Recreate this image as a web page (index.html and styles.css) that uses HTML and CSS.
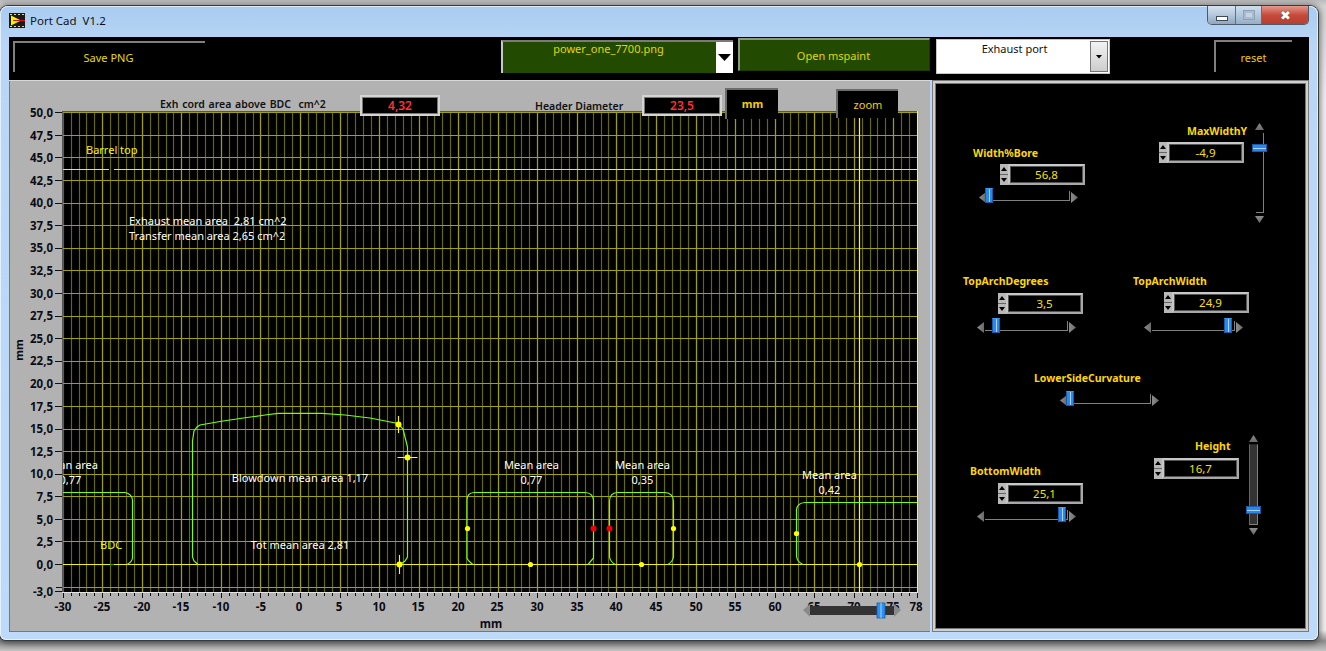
FILE: index.html
```html
<!DOCTYPE html>
<html lang="en">
<head>
<meta charset="utf-8">
<title>Port Cad V1.2</title>
<link rel="stylesheet" href="styles.css">
</head>
<body>
<div class="window">
  <header class="titlebar">
    <svg class="app-icon" width="16" height="15" viewBox="0 0 16 15">
      <rect width="16" height="15" fill="#1a1a1a"/>
      <path d="M1 1h2v1H1zM5 1h2v1H5zM9 1h2v1H9zM13 1h2v1h-2zM1 13h2v1H1zM5 13h2v1H5zM9 13h2v1H9zM13 13h2v1h-2z" fill="#e8d8a0"/>
      <path d="M2 2.500l10 5-10 5z" fill="#fff200"/>
      <path d="M4 7.500h12" stroke="#e01010"/>
    </svg>
    <span class="title-text">Port Cad&nbsp; V1.2</span>
    <div class="win-buttons">
      <div class="wb wb-min"><span class="min-glyph"></span></div>
      <div class="wb wb-max"><span class="max-glyph"></span></div>
      <div class="wb wb-close">✖</div>
    </div>
  </header>

  <div class="content">
    <div class="toolbar">
      <div class="tbtn save">Save PNG</div>
      <div class="combo">
        <span class="combo-text">power_one_7700.png</span>
        <span class="combo-arrow"><i></i></span>
      </div>
      <div class="open">Open mspaint</div>
      <div class="ring">
        <span class="ring-text">Exhaust port</span>
        <span class="ring-arrow"><i></i></span>
      </div>
      <div class="tbtn reset">reset</div>
    </div>

    <div class="main">
      <section class="graph-panel">
        <div class="graph-head">
          <span class="head-label l-cord">Exh cord area above BDC&nbsp; cm^2</span>
          <span class="indicator i-cord">4,32</span>
          <span class="head-label l-header">Header Diameter</span>
          <span class="indicator i-header">23,5</span>
          <span class="graph-btn b-mm">mm</span>
          <span class="graph-btn b-zoom">zoom</span>
        </div>

        <svg class="chart" width="921" height="521" viewBox="9 111 921 521" shape-rendering="crispEdges">
          <defs>
            <path id="vminor" d="M63 111v481M71 111v481M79 111v481M86 111v481M94 111v481M110 111v481M118 111v481M126 111v481M134 111v481M150 111v481M158 111v481M166 111v481M173 111v481M189 111v481M197 111v481M205 111v481M213 111v481M229 111v481M237 111v481M245 111v481M253 111v481M268 111v481M276 111v481M284 111v481M292 111v481M308 111v481M316 111v481M324 111v481M332 111v481M347 111v481M355 111v481M363 111v481M371 111v481M387 111v481M395 111v481M403 111v481M411 111v481M427 111v481M434 111v481M442 111v481M450 111v481M466 111v481M474 111v481M482 111v481M490 111v481M506 111v481M514 111v481M521 111v481M529 111v481M545 111v481M553 111v481M561 111v481M569 111v481M585 111v481M593 111v481M601 111v481M608 111v481M624 111v481M632 111v481M640 111v481M648 111v481M664 111v481M672 111v481M680 111v481M688 111v481M703 111v481M711 111v481M719 111v481M727 111v481M743 111v481M751 111v481M759 111v481M767 111v481M783 111v481M790 111v481M798 111v481M806 111v481M822 111v481M830 111v481M838 111v481M846 111v481M862 111v481M870 111v481M877 111v481M885 111v481M901 111v481M909 111v481M917 111v481"/>
            <path id="vmajor" d="M102 111v481M142 111v481M181 111v481M221 111v481M260 111v481M300 111v481M340 111v481M379 111v481M419 111v481M458 111v481M498 111v481M537 111v481M577 111v481M616 111v481M656 111v481M696 111v481M735 111v481M775 111v481M814 111v481M854 111v481M893 111v481"/>
            <clipPath id="plot-clip"><rect x="63" y="112" width="854" height="480"/></clipPath>
            <clipPath id="tick-minor"><rect x="60" y="593" width="860" height="3"/></clipPath>
            <clipPath id="tick-major"><rect x="60" y="593" width="860" height="5"/></clipPath>
          </defs>

          <!-- axis ticks -->
          <g class="ticks">
            <g clip-path="url(#tick-major)"><use href="#vmajor" transform="translate(0 8)"/><path d="M63 593v5M917 593v5"/></g>
            <g clip-path="url(#tick-minor)"><use href="#vminor" transform="translate(0 8)"/></g>
            <path d="M55 112.500h7M55 135.500h7M55 157.500h7M55 180.500h7M55 203.500h7M55 225.500h7M55 248.500h7M55 270.500h7M55 293.500h7M55 316.500h7M55 338.500h7M55 361.500h7M55 383.500h7M55 406.500h7M55 429.500h7M55 451.500h7M55 474.500h7M55 496.500h7M55 519.500h7M55 541.500h7M55 564.500h7M56 587.500h6M55 591.500h7"/>
          </g>

          <!-- plot -->
          <rect class="plot-bg" x="62" y="111" width="855" height="481"/>
          <g class="soft-lines" shape-rendering="geometricPrecision" transform="translate(.5 0)">
            <use href="#vminor" class="grid-minor"/>
            <use href="#vmajor" class="grid-major"/>
          </g>
          <path class="grid-h" d="M63 112.500H917M63 135.500H917M63 157.500H917M63 180.500H917M63 203.500H917M63 225.500H917M63 248.500H917M63 270.500H917M63 293.500H917M63 316.500H917M63 338.500H917M63 361.500H917M63 383.500H917M63 406.500H917M63 429.500H917M63 451.500H917M63 474.500H917M63 496.500H917M63 519.500H917M63 541.500H917M63 587.500H917"/>
          <path class="edge-dark" d="M62 592V111.500H917"/>
          <path class="edge-light" d="M917.500 111V592.500H62"/>

          <g clip-path="url(#plot-clip)">
            <path class="bright" d="M63 169.500H109M114 169.500H917M63 564.500H917"/>
            <path class="bright-v" shape-rendering="geometricPrecision" d="M859.500 112V592"/>
            <path class="plot-green" d="M110 564.500h4"/>
            <g class="curves" shape-rendering="geometricPrecision">
              <path d="M198 564.500L194 561 192.500 557V441L194 431 197 427 200 425 220 421.500 240 418.500 265 415 278 413.300H322L345 415 370 418 398 423.500 403 429 406 441 407.500 447V557L405 561 400 564.500"/>
              <path d="M63 492.500H125Q132 494 132.500 500V558Q132 562 127 564.500"/>
              <path d="M473 564.500Q468 561 467 558V500Q467 493 474 492.500H585Q593 493 593.500 500V558L588 564.500"/>
              <path d="M615 564.500Q610 561 609.500 557V501Q610 493 617 492.500H665Q673 493 673.500 501V557Q673 561 668 564.500"/>
              <path d="M803 564.500Q797 562 796.500 556V510Q797 503 805 502.500H917"/>
            </g>
            <g shape-rendering="geometricPrecision">
              <path class="cross" d="M398.500 416v17M397.500 457.500h20M399.500 555v19"/>
              <g class="dot-y">
                <circle cx="398.500" cy="424.500" r="3"/><circle cx="407.500" cy="457.500" r="3"/><circle cx="399.500" cy="564.500" r="3"/>
                <circle cx="467.500" cy="528.500" r="2.600"/><circle cx="530.500" cy="564.500" r="2.600"/><circle cx="673.500" cy="528.500" r="2.600"/>
                <circle cx="641.500" cy="564.500" r="2.600"/><circle cx="796.500" cy="533.500" r="2.600"/><circle cx="859.500" cy="564.500" r="2.600"/>
              </g>
              <g class="dot-r"><circle cx="593.500" cy="528.500" r="3"/><circle cx="609.500" cy="528.500" r="3"/></g>
            </g>
            <g class="plot-text" shape-rendering="geometricPrecision">
              <text x="129" y="225">Exhaust mean area&#160; 2,81 cm^2</text>
              <text x="129" y="240">Transfer mean area 2,65 cm^2</text>
              <g class="mid">
                <text x="300" y="482">Blowdown mean area 1,17</text>
                <text x="300" y="549">Tot mean area 2,81</text>
                <text x="70.500" y="484">0,77</text>
                <text x="531.500" y="469">Mean area</text><text x="531.500" y="484">0,77</text>
                <text x="642.500" y="469">Mean area</text><text x="642.500" y="484">0,35</text>
                <text x="829.500" y="479">Mean area</text><text x="829.500" y="494">0,42</text>
              </g>
              <text class="end" x="98" y="469">an area</text>
              <text class="plot-yellow" x="86" y="154">Barrel top</text>
              <text class="plot-yellow" x="100" y="549">BDC</text>
            </g>
          </g>

          <!-- axis labels -->
          <g class="axis-text y-labels" shape-rendering="geometricPrecision">
            <text x="53" y="117">50,0</text><text x="53" y="162">45,0</text><text x="53" y="140">47,5</text><text x="53" y="185">42,5</text>
            <text x="53" y="207">40,0</text><text x="53" y="230">37,5</text><text x="53" y="252">35,0</text><text x="53" y="275">32,5</text>
            <text x="53" y="298">30,0</text><text x="53" y="320">27,5</text><text x="53" y="343">25,0</text><text x="53" y="365">22,5</text>
            <text x="53" y="388">20,0</text><text x="53" y="411">17,5</text><text x="53" y="433">15,0</text><text x="53" y="456">12,5</text>
            <text x="53" y="478">10,0</text><text x="53" y="501">7,5</text><text x="53" y="524">5,0</text><text x="53" y="546">2,5</text>
            <text x="53" y="569">0,0</text><text x="53" y="596">-3,0</text>
          </g>
          <g class="axis-text x-labels" shape-rendering="geometricPrecision">
            <text x="63" y="611">-30</text><text x="102" y="611">-25</text><text x="142" y="611">-20</text><text x="181" y="611">-15</text>
            <text x="221" y="611">-10</text><text x="261" y="611">-5</text><text x="299" y="611">0</text><text x="339" y="611">5</text>
            <text x="379" y="611">10</text><text x="418" y="611">15</text><text x="458" y="611">20</text><text x="497" y="611">25</text>
            <text x="537" y="611">30</text><text x="577" y="611">35</text><text x="616" y="611">40</text><text x="656" y="611">45</text>
            <text x="696" y="611">50</text><text x="735" y="611">55</text><text x="775" y="611">60</text><text x="814" y="611">65</text>
            <text x="854" y="611">70</text><text x="893" y="611">75</text><text x="916" y="611">78</text>
            <text x="491" y="628">mm</text>
          </g>
          <text class="axis-text y-title" transform="translate(23 350) rotate(-90)" shape-rendering="geometricPrecision">mm</text>

          <!-- zoom slider on the chart -->
          <g shape-rendering="geometricPrecision">
            <path d="M803 610l7-6v13z" fill="#8a8a8a"/>
            <path d="M901 610l-7-6v13z" fill="#8a8a8a"/>
            <rect x="810" y="606" width="84" height="9" fill="#333"/>
            <rect x="877" y="603" width="8" height="15" fill="#2d8ff0" stroke="#1a5fb0" stroke-width=".8"/>
            <path d="M881 603v15" stroke="#a8d4ff"/>
          </g>
        </svg>
      </section>

      <aside class="side-panel">
        <div class="control c-width">
          <div class="ctl-label">Width%Bore</div>
          <div class="num"><span class="spin"><b></b><b class="dn"></b></span><span class="val">56,8</span></div>
          <div class="hslider"><i class="al"></i><i class="track"></i><i class="ar"></i><i class="thumb" style="left:6px"></i></div>
        </div>
        <div class="control c-max">
          <div class="ctl-main">
            <div class="ctl-label">MaxWidthY</div>
            <div class="num"><span class="spin"><b></b><b class="dn"></b></span><span class="val">-4,9</span></div>
          </div>
          <div class="vslider"><i class="au"></i><i class="vtrack"></i><i class="ad"></i><i class="vthumb" style="top:21px"></i></div>
        </div>
        <div class="control c-deg">
          <div class="ctl-label">TopArchDegrees</div>
          <div class="num"><span class="spin"><b></b><b class="dn"></b></span><span class="val">3,5</span></div>
          <div class="hslider"><i class="al"></i><i class="track"></i><i class="ar"></i><i class="thumb" style="left:15px"></i></div>
        </div>
        <div class="control c-arch">
          <div class="ctl-label">TopArchWidth</div>
          <div class="num"><span class="spin"><b></b><b class="dn"></b></span><span class="val">24,9</span></div>
          <div class="hslider"><i class="al"></i><i class="track"></i><i class="ar"></i><i class="thumb" style="left:80px"></i></div>
        </div>
        <div class="control c-lower">
          <div class="ctl-label">LowerSideCurvature</div>
          <div class="hslider"><i class="al"></i><i class="track"></i><i class="ar"></i><i class="thumb" style="left:6px"></i></div>
        </div>
        <div class="control c-bottom">
          <div class="ctl-label">BottomWidth</div>
          <div class="num"><span class="spin"><b></b><b class="dn"></b></span><span class="val">25,1</span></div>
          <div class="hslider"><i class="al"></i><i class="track"></i><i class="ar"></i><i class="thumb" style="left:81px"></i></div>
        </div>
        <div class="control c-height">
          <div class="ctl-main">
            <div class="ctl-label">Height</div>
            <div class="num"><span class="spin"><b></b><b class="dn"></b></span><span class="val">16,7</span></div>
          </div>
          <div class="vslider filled"><i class="au"></i><i class="vtrack"></i><i class="ad"></i><i class="vthumb" style="top:71px"></i></div>
        </div>
      </aside>
    </div>
  </div>
</div>
</body>
</html>
```

FILE: styles.css
```css
* { box-sizing: border-box; }
html, body { margin: 0; height: 100%; }
body {
  width: 1326px;
  height: 651px;
  overflow: hidden;
  background: linear-gradient(#bcbcbc 0, #d4d4d4 6px, #f4f4f4 100px, #f4f4f4 630px, #8e8e8e 641px, #c4c4c4 651px);
  font: 11px "Noto Sans", "Liberation Sans", sans-serif;
  padding-top: 6px;
}
i, b { display: block; font-style: normal; }

.window {
  width: 1318px;
  height: 634px;
  padding: 0 9px 0 9px;
  background: linear-gradient(#a9ccf0 0, #b9d6f6 40px, #bddafa 100%);
  border-radius: 8px 8px 6px 6px;
  box-shadow: 0 0 0 1px #3a3a3a, 0 1px 7px 2px rgba(0,0,0,.55), inset 0 0 0 1px rgba(255,255,255,.6);
}

/* title bar */
.titlebar { height: 31px; display: flex; align-items: flex-start; position: relative; }
.app-icon { flex: none; margin-top: 7px; }
.title-text { margin: 7px 0 0 5px; font-size: 11.5px; line-height: 16px; color: #111; white-space: nowrap; }
.win-buttons {
  margin-left: auto;
  margin-right: 0;
  display: flex;
  height: 19px;
  border: 1px solid #4c5a6a;
  border-top: 0;
  border-radius: 0 0 5px 5px;
  overflow: hidden;
  flex: none;
}
.wb { height: 18px; display: flex; align-items: center; justify-content: center; }
.wb-min { width: 28px; background: linear-gradient(#d6e2ee, #b4c8dc 50%, #8fa6bd); border-right: 1px solid #5e7085; }
.wb-max { width: 26px; background: linear-gradient(#cfdeec, #b2c8de 50%, #96aec6); border-right: 1px solid #5e7085; }
.wb-close { width: 46px; background: linear-gradient(#e49a8e, #c8493c 50%, #b4402f); color: #fff; font-size: 13px; line-height: 18px; text-shadow: 0 0 1px #333; }
.min-glyph { width: 12px; height: 5px; margin-top: 6px; background: #fff; border: 1px solid #3c4a5a; }
.max-glyph { width: 12px; height: 10px; border: 1px solid #8ea1b5; background: #c4d4e4; box-shadow: inset 0 0 0 2px #a9bccf; }

/* content */
.content { width: 1300px; }
.toolbar { height: 43px; background: #000; display: flex; align-items: flex-start; }
.toolbar > * { flex: none; }
.tbtn {
  display: flex; align-items: center; justify-content: center;
  border-top: 2px solid #808080;
  border-left: 2px solid #808080;
  color: #e8dc00;
}
.save { margin: 4px 0 0 4px; width: 192px; height: 31px; padding-right: 3px; }
.reset { margin: 3px 0 0 104px; width: 78px; height: 32px; color: #f0c800; padding: 1px 1px 0 0; }
.combo {
  margin: 3px 0 0 296px;
  width: 232px;
  height: 33px;
  display: flex;
  background: #224a00;
  border-top: 2px solid #7a7a7a;
  border-left: 2px solid #c8c8c8;
}
.combo-text { flex: 1; text-align: center; color: #e0d800; line-height: 15px; margin-top: -1px; font-size: 11px; padding-right: 2px; }
.combo-arrow { width: 17px; background: #fff; display: flex; align-items: center; justify-content: center; }
.combo-arrow i { width: 13px; height: 7px; background: #000; clip-path: polygon(0 0, 100% 0, 50% 100%); }
.open {
  margin: 1px 0 0 5px;
  width: 192px;
  height: 33px;
  display: flex; align-items: center; justify-content: center;
  padding-right: 2px;
  background: #224a00;
  color: #e0d800;
  border: 1px solid #1a3a00;
  border-top: 2px solid #8a9a80;
  border-left: 2px solid #8a9a80;
}
.ring {
  margin: 2px 0 0 6px;
  width: 174px;
  height: 35px;
  background: #fff;
  border: 1px solid #c8c8c8;
  display: flex;
  color: #111;
}
.ring-text { flex: 1; text-align: center; line-height: 15px; margin-top: 1px; padding-left: 2px; }
.ring-arrow {
  width: 18px; height: 31px; margin: 1px 1px 0 0;
  background: linear-gradient(#f2f2f2, #cdcdcd);
  border: 1px solid #777;
  display: flex; align-items: center; justify-content: center;
}
.ring-arrow i { width: 7px; height: 4px; background: #000; clip-path: polygon(0 0, 100% 0, 50% 100%); }

.main { display: flex; height: 552px; }
.graph-panel { flex: none; width: 921px; background: #b2b2b2; box-shadow: inset 0 1px 0 #d8d8d8, inset 1px 0 0 #777, inset 0 -1px 0 #777; }
.graph-head { height: 31px; display: flex; align-items: flex-start; position: relative; z-index: 1; }
.graph-head > * { flex: none; white-space: nowrap; }
.head-label { font-weight: 600; font-size: 10.5px; line-height: 14px; color: #111; }
.l-cord { width: 165px; margin: 17px 0 0 151px; word-spacing: 1px; }
.l-header { width: 87px; margin: 19px 0 0 95px; }
.indicator {
  width: 80px; height: 21px;
  background: #000;
  border: 2px solid #d4d4d4;
  box-shadow: inset 0 0 0 1px #777;
  color: #ff3030;
  font-weight: 600;
  font-size: 12px;
  line-height: 17px;
  text-align: center;
}
.i-cord { margin: 15px 0 0 35px; }
.i-header { margin: 15px 0 0 20px; }
.graph-btn {
  background: #000;
  border-top: 2px solid #6c6c6c;
  border-left: 2px solid #6c6c6c;
  color: #f0d000;
  text-align: center;
}
.b-mm { width: 53px; height: 31px; margin: 8px 0 0 3px; font-weight: 700; line-height: 27px; }
.b-zoom { width: 62px; height: 29px; margin: 9px 0 0 58px; line-height: 27px; }

/* chart */
.chart { display: block; overflow: visible; }
.chart text { font-family: "Noto Sans", "Liberation Sans", sans-serif; }
.plot-bg { fill: #000; }
.grid-minor { stroke: #686800; stroke-width: 1.15; fill: none; }
.grid-major { stroke: #a0a000; stroke-width: 1.25; fill: none; }
.grid-h { stroke: #a3a300; stroke-width: 1; fill: none; }
.edge-dark { stroke: #555; fill: none; }
.edge-light { stroke: #e4e4e4; fill: none; }
.bright { stroke: #f4f400; fill: none; }
.bright-v { stroke: #ffff00; stroke-width: 1.25; fill: none; }
.plot-green { stroke: #10a010; }
.curves path { fill: none; stroke: #78ff10; stroke-width: 1.2; }
.cross { stroke: #ffff00; stroke-width: 1.1; fill: none; }
.dot-y { fill: #ffff00; }
.dot-r { fill: #f00000; }
.plot-text text { fill: #fff; font-size: 11px; }
.mid text { text-anchor: middle; }
.plot-text .end { text-anchor: end; }
.plot-text .plot-yellow { fill: #f8f800; }
.ticks { stroke: #111; fill: none; }
.axis-text { fill: #0c0c14; font-size: 11.5px; font-weight: 700; }
.y-labels text { text-anchor: end; }
.x-labels text { text-anchor: middle; }
.y-title { text-anchor: middle; font-size: 11px; }

/* side panel */
.side-panel {
  flex: none;
  width: 377px;
  margin-left: 2px;
  background: #000;
  box-shadow: inset 0 0 0 1px #7a7a7a, inset 0 0 0 3px #d0d0d0, inset 0 0 0 4px #777;
  display: grid;
  grid-template-columns: 190px 1fr;
  grid-template-rows: 160px 120px 70px 1fr;
}
.control { --lx: 0px; --nx: 0px; --sx: 0px; --sg: 3px; --lg: 4px; }
.ctl-label {
  margin-left: var(--lx);
  font-weight: 700;
  font-size: 10.5px;
  line-height: 14px;
  color: #ffd800;
  white-space: nowrap;
}
.num { display: flex; width: 85px; height: 21px; margin: var(--lg) 0 0 var(--nx); }
.spin { flex: none; width: 8px; display: flex; flex-direction: column; background: #b8b8b8; }
.spin b { flex: 1; position: relative; border-bottom: 1px solid #666; }
.spin b::after {
  content: ""; position: absolute; left: 1px; top: 3px; width: 6px; height: 4px; background: #000;
  clip-path: polygon(50% 0, 100% 100%, 0 100%);
}
.spin b.dn { border-bottom: 0; }
.spin b.dn::after { clip-path: polygon(0 0, 100% 0, 50% 100%); }
.val {
  flex: 1;
  background: #000;
  border: 2px solid #c8c8c8;
  border-right-color: #a8a8a8;
  border-bottom-color: #a8a8a8;
  box-shadow: inset 0 0 0 1px #555;
  color: #f8e000;
  text-align: center;
  font-size: 11.5px;
  line-height: 17px;
}
.hslider { position: relative; width: 99px; height: 16px; margin: var(--sg) 0 0 var(--sx); }
.al, .ar { position: absolute; top: 4px; width: 7px; height: 11px; background: linear-gradient(90deg, #8c8c8c, #6a6a6a); }
.al { left: 0; clip-path: polygon(100% 0, 100% 100%, 0 50%); }
.ar { right: 0; clip-path: polygon(0 0, 0 100%, 100% 50%); }
.track { position: absolute; left: 8px; top: 3px; width: 83px; height: 10px; border-right: 1px solid #808080; border-bottom: 1px solid #808080; }
.thumb {
  position: absolute; top: 0; width: 8px; height: 15px;
  background: linear-gradient(90deg, #2a88ea 0 3px, #a8d4ff 3px 4px, #2a88ea 4px);
  border: 1px solid #1a5aa8;
  border-top-color: #3a98f8;
}
.vslider { position: relative; flex: none; width: 15px; height: 100px; }
.au, .ad { position: absolute; left: 3px; width: 9px; height: 7px; background: linear-gradient(#8c8c8c, #6a6a6a); }
.au { top: 0; clip-path: polygon(50% 0, 100% 100%, 0 100%); }
.ad { bottom: 0; clip-path: polygon(0 0, 100% 0, 50% 100%); }
.vtrack { position: absolute; left: 4px; top: 10px; width: 8px; height: 80px; border-right: 1px solid #808080; border-bottom: 1px solid #808080; }
.filled .vtrack { left: 3px; top: 9px; width: 9px; height: 81px; background: #333; border: 1px solid #808080; border-top-color: #222; border-left-color: #666; }
.vthumb {
  position: absolute; left: 0; width: 15px; height: 8px;
  background: linear-gradient(#2a88ea 0 3px, #a8d4ff 3px 4px, #2a88ea 4px);
  border: 1px solid #1a5aa8;
}

.c-width { --lx: 41px; --nx: 68px; --sx: 47px; padding-top: 66px; }
.c-max { display: flex; align-items: flex-start; }
.c-max .ctl-main { width: 130px; flex: none; padding-top: 44px; --lx: 65px; --nx: 37px; }
.c-max .vslider { margin-top: 43px; }
.c-deg { --lx: 31px; --nx: 66px; --sx: 45px; --lg: 5px; --sg: 4px; padding-top: 34px; }
.c-arch { --lx: 11px; --nx: 42px; --sx: 22px; --sg: 5px; padding-top: 34px; }
.c-lower { grid-column: 1 / -1; --lx: 102px; --sx: 128px; --sg: 6px; padding-top: 11px; }
.c-bottom { --lx: 38px; --nx: 66px; --sx: 45px; --lg: 5px; padding-top: 34px; }
.c-height { display: flex; align-items: flex-start; }
.c-height .ctl-main { width: 124px; flex: none; padding-top: 9px; --lx: 73px; --nx: 32px; --lg: 5px; }
.c-height .vslider { margin-top: 5px; }
```
